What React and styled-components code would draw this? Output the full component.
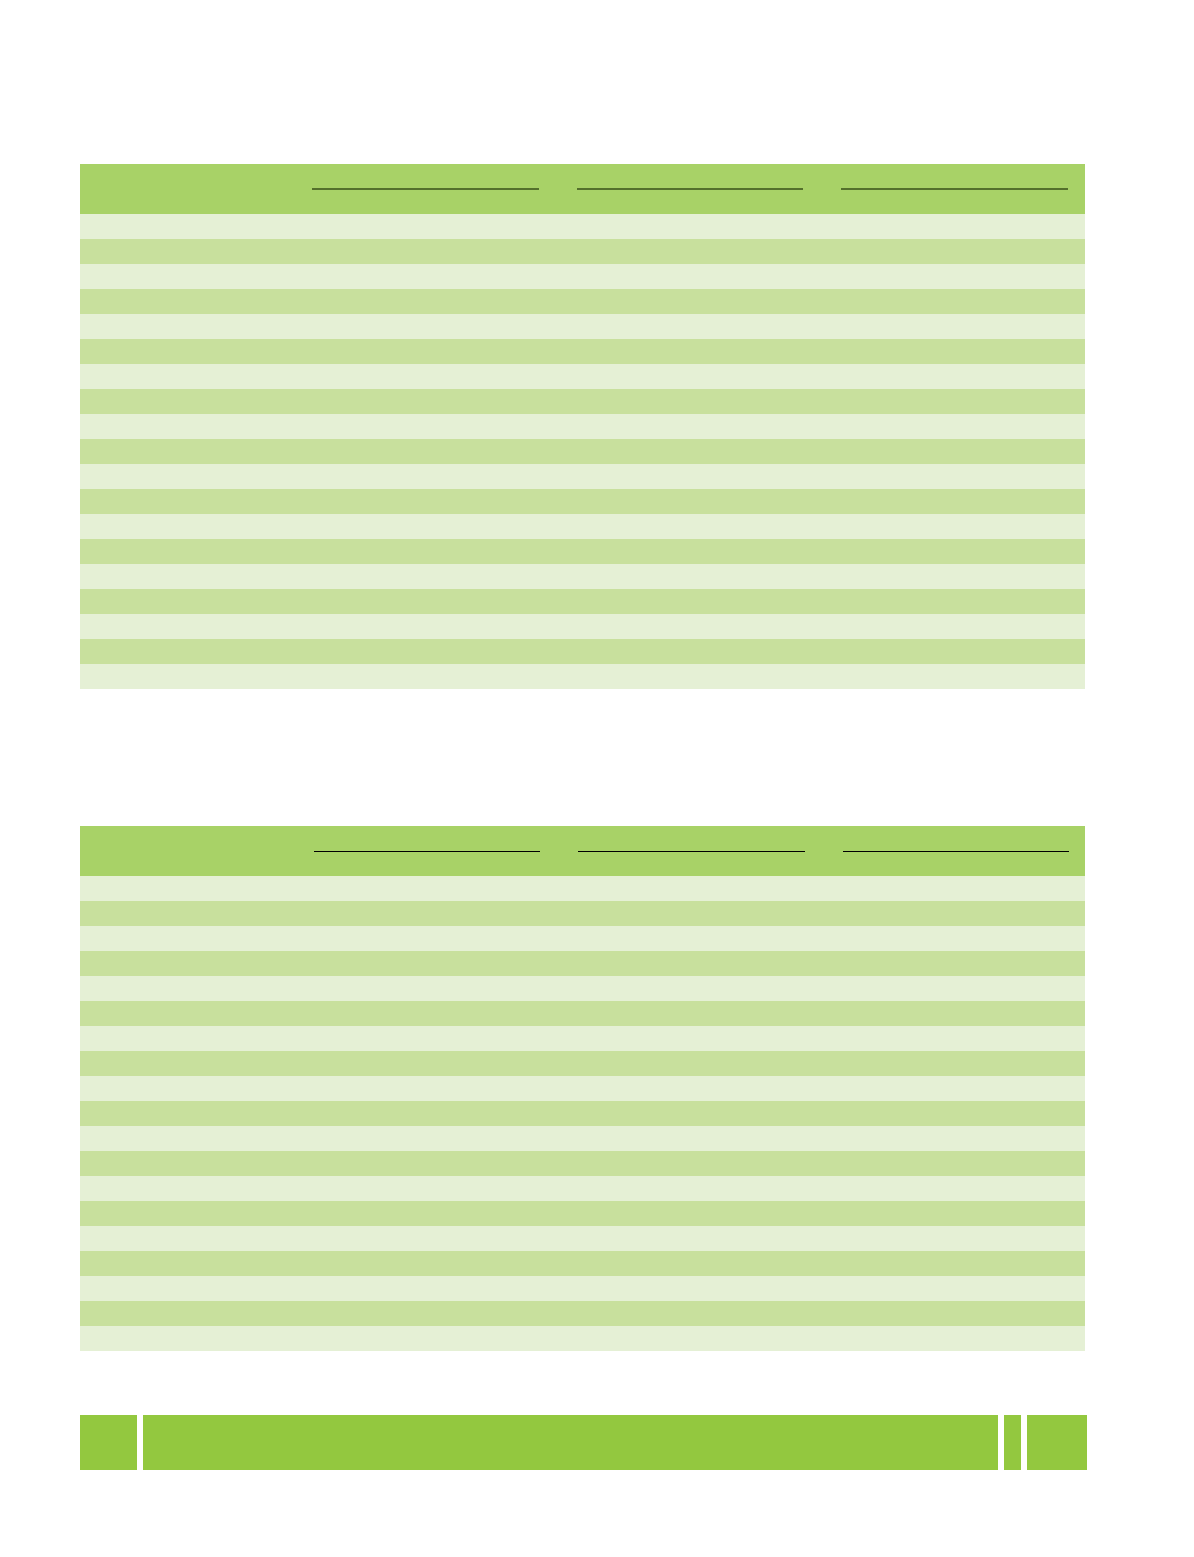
import React from "react";
import styled, { createGlobalStyle } from "styled-components";

const GlobalStyle = createGlobalStyle`
  html, body {
    margin: 0;
    padding: 0;
    background: #ffffff;
    font-family: "Liberation Sans", Arial, sans-serif;
  }
`;

const Page = styled.div`
  width: 1194px;
  height: 1557px;
  box-sizing: border-box;
  padding: 164px 0 0 80px;
  display: flex;
  flex-direction: column;
`;

const Table = styled.div`
  width: 1005px;
  display: flex;
  flex-direction: column;
  margin-bottom: ${props => props.spaceAfter}px;
`;

// first column is blank; the three rules sit over the data columns
const HeaderRow = styled.div`
  height: 50px;
  background: #a8d267;
  display: grid;
  grid-template-columns: ${props => props.firstCol}px repeat(3, 1fr);
  column-gap: 38px;
  padding-right: ${props => props.padRight}px;
  align-items: center;
`;

const HeaderRule = styled.div`
  height: ${props => props.thick}px;
  background: ${props => props.color};
`;

const BodyRow = styled.div`
  height: 25px;
  background: ${props => (props.shaded ? "#c8e09d" : "#e5f0d5")};
`;

const Footer = styled.div`
  display: flex;
  gap: 6px;
  height: 55px;
`;

const FooterBlock = styled.div`
  width: ${props => props.w}px;
  background: #93c83f;
`;

const rows = Array.from({ length: 19 }, (_, i) => i);

function DataTable({ firstCol, padRight, ruleColor, ruleThick, spaceAfter }) {
  return (
    <Table spaceAfter={spaceAfter}>
      <HeaderRow firstCol={firstCol} padRight={padRight}>
        <div />
        <HeaderRule color={ruleColor} thick={ruleThick} />
        <HeaderRule color={ruleColor} thick={ruleThick} />
        <HeaderRule color={ruleColor} thick={ruleThick} />
      </HeaderRow>
      {rows.map(i => (
        <BodyRow key={i} shaded={i % 2 === 1} />
      ))}
    </Table>
  );
}

export default function App() {
  return (
    <>
      <GlobalStyle />
      <Page>
        <DataTable firstCol={194} padRight={17} ruleColor="#54702c" ruleThick={2} spaceAfter={137} />
        <DataTable firstCol={196} padRight={16} ruleColor="#000000" ruleThick={1} spaceAfter={64} />
        <Footer>
          <FooterBlock w={57} />
          <FooterBlock w={855} />
          <FooterBlock w={17} />
          <FooterBlock w={60} />
        </Footer>
      </Page>
    </>
  );
}
